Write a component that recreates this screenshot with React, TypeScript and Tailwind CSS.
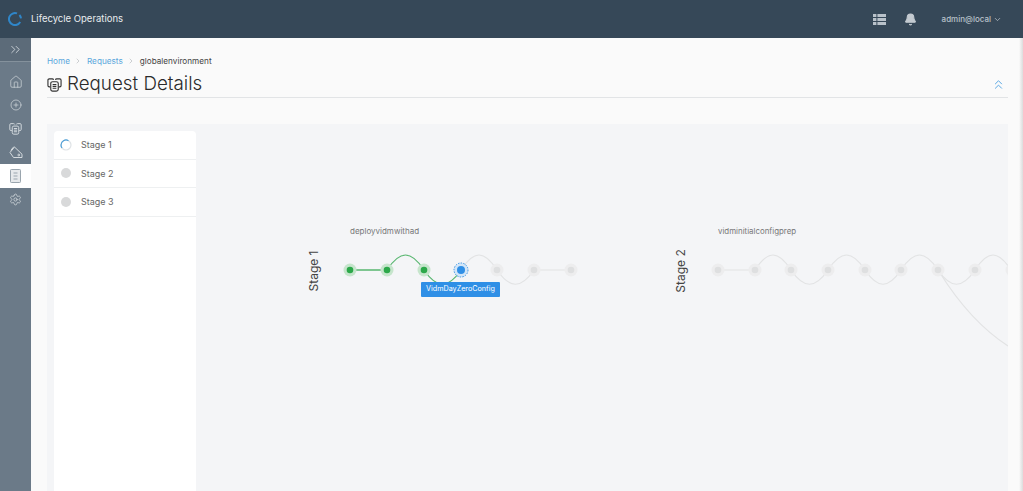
import { Bell, ChevronDown, ChevronRight, ChevronsRight, ChevronsUp, CirclePlus, House, Settings } from 'lucide-react';

const font = { fontFamily: 'Inter' };

function Logo() {
    return (
        <svg width="14" height="14" viewBox="0 0 14 14" fill="none" stroke="#2f86c9" strokeWidth="2">
            <path d="M9 1.4A6 6 0 1 0 12.2 10" />
            <path d="M11.4 3A6 6 0 0 1 13 6.4" />
        </svg>
    );
}

function ListIcon() {
    return (
        <svg width="13" height="11" viewBox="0 0 13 11" fill="#b9c2ca">
            <rect x="0" y="0" width="3.4" height="3" />
            <rect x="4.4" y="0" width="8.6" height="3" />
            <rect x="0" y="4" width="3.4" height="3" />
            <rect x="4.4" y="4" width="8.6" height="3" />
            <rect x="0" y="8" width="3.4" height="3" />
            <rect x="4.4" y="8" width="8.6" height="3" />
        </svg>
    );
}

function RequestIcon({ size, color, fill }: { size: number; color: string; fill: string }) {
    return (
        <svg width={size} height={size} viewBox="0 0 16 16" fill="none" stroke={color} strokeWidth="1.2">
            <path d="M3.5 10.5H2.4a1.4 1.4 0 0 1-1.4-1.4V3.4A1.4 1.4 0 0 1 2.4 2h3.2a1.4 1.4 0 0 1 1.4 1" />
            <path d="M9 3a1.4 1.4 0 0 1 1.4-1h3.2A1.4 1.4 0 0 1 15 3.4v5.7a1.4 1.4 0 0 1-1.4 1.4h-1.1" />
            <rect x="4" y="5" width="8" height="10" rx="2" fill={fill} />
            <path d="M6 8h4M6 10h4M6 12h4" />
        </svg>
    );
}

function TagsIcon() {
    return (
        <svg width="14" height="14" viewBox="0 0 14 14" fill="none" stroke="#d4dade" strokeWidth="1">
            <path d="M1 7.5 5.5 2l7.5 7.2V12.5H4.5Z" />
            <path d="M3 3.8 5 1.6M1.8 5.4l2-2.3" />
            <circle cx="9.8" cy="10" r="0.9" />
        </svg>
    );
}

function DocIcon() {
    return (
        <svg width="11" height="14" viewBox="0 0 11 14" fill="none" stroke="#9aa5ae" strokeWidth="1">
            <rect x="0.5" y="0.5" width="10" height="13" rx="0.8" fill="#e6e9eb" />
            <path d="M3.5 4h4M3.5 7h4M3.5 10h4" />
        </svg>
    );
}

function Spinner() {
    return (
        <svg width="12" height="12" viewBox="0 0 12 12" fill="none" strokeWidth="1.2">
            <circle cx="6" cy="6" r="5" stroke="#dfe3e6" />
            <path d="M8.5 1.7A5 5 0 0 0 1 6a5 5 0 0 0 1 3" stroke="#4d9fd8" />
        </svg>
    );
}

function SideItem({ children, active }: { children: React.ReactNode; active?: boolean }) {
    return (
        <div className={active ? 'h-[23.5px] flex items-center justify-center bg-white' : 'h-[23.5px] flex items-center justify-center'}>
            {children}
        </div>
    );
}

function Node({ x, kind }: { x: number; kind: 'done' | 'active' | 'idle' }) {
    if (kind === 'active') {
        return (
            <g>
                <circle cx={x} cy={270} r={7} fill="#d3e6f8" stroke="#3c95e4" strokeWidth="1" strokeDasharray="1.5 1.2" />
                <circle cx={x} cy={270} r={4} fill="#2f8fe6" />
            </g>
        );
    }
    const halo = kind === 'done' ? '#c6e5cc' : '#ededee';
    const dot = kind === 'done' ? '#2ca84a' : '#dedfe0';
    return (
        <g>
            <circle cx={x} cy={270} r={6.5} fill={halo} />
            <circle cx={x} cy={270} r={3.3} fill={dot} />
        </g>
    );
}

const green = '#57b66f';
const grey = '#e2e3e4';

function StageGraph() {
    // page coordinates, shifted into the canvas by the group transform
    return (
        <svg width="812" height="360" className="absolute left-0 top-0" fill="none" strokeWidth="1.2">
            <g transform="translate(-196 -131)">
                <path d="M350 270H387" stroke={green} strokeWidth="1.5" />
                <path d="M387 270C400 250 411 250 424 270" stroke={green} />
                <path d="M424 270C437 289 448 289 461 270" stroke={green} />
                <path d="M461 270C474 250 484 250 497 270" stroke={grey} />
                <path d="M497 270C510 289 521 289 534 270" stroke={grey} />
                <path d="M534 270H571" stroke={grey} />
                <Node x={350} kind="done" />
                <Node x={387} kind="done" />
                <Node x={424} kind="done" />
                <Node x={461} kind="active" />
                <Node x={497} kind="idle" />
                <Node x={534} kind="idle" />
                <Node x={571} kind="idle" />

                <path d="M718 270H755" stroke={grey} />
                <path d="M755 270C768 250 778 250 791 270" stroke={grey} />
                <path d="M791 270C804 289 815 289 828 270" stroke={grey} />
                <path d="M828 270C841 250 852 250 865 270" stroke={grey} />
                <path d="M865 270C878 289 888 289 901 270" stroke={grey} />
                <path d="M901 270C914 250 925 250 938 270" stroke={grey} />
                <path d="M938 270C951 289 962 289 975 270" stroke={grey} />
                <path d="M975 270C988 250 998 250 1011 270" stroke={grey} />
                <path d="M940 273C960 305 982 329 1008 346" stroke={grey} />
                {[718, 755, 791, 828, 865, 901, 938, 975, 1012].map((x) => (
                    <Node key={x} x={x} kind="idle" />
                ))}
            </g>
        </svg>
    );
}

export default function App() {
    return (
        <div className="h-screen flex flex-col overflow-hidden bg-[#fafafa]" style={font}>
            {/* Header */}
            <header className="h-[38px] shrink-0 flex items-center bg-[#364858] pl-[8px] pr-[21px]">
                <Logo />
                <span className="ml-[9px] text-[9.5px] text-[#e8ecef]">Lifecycle Operations</span>
                <div className="ml-auto flex items-center">
                    <ListIcon />
                    <Bell className="ml-[18px] w-[13px] h-[13px] text-[#c3cad0] fill-[#c3cad0]" />
                    <span className="ml-[25px] text-[8px] font-medium text-[#b9c2ca]">admin@local</span>
                    <ChevronDown className="ml-[2px] w-[9px] h-[9px] text-[#b9c2ca]" />
                </div>
            </header>

            <div className="flex-1 flex min-h-0">
                {/* Sidebar */}
                <aside className="w-[31px] shrink-0 bg-[#6b7a88]">
                    <div className="h-[24px] flex items-center justify-center bg-[#5c6b79] border-b border-[#84919c]">
                        <ChevronsRight className="w-[15px] h-[15px] text-[#dde2e6]" strokeWidth={1.3} />
                    </div>
                    <div className="pt-[8px]">
                        <SideItem><House className="w-[14px] h-[14px] text-[#d4dade]" strokeWidth={1.2} /></SideItem>
                        <SideItem><CirclePlus className="w-[12px] h-[12px] text-[#d4dade]" strokeWidth={1.4} /></SideItem>
                        <SideItem><RequestIcon size={13} color="#d4dade" fill="#6b7a88" /></SideItem>
                        <SideItem><TagsIcon /></SideItem>
                        <SideItem active><DocIcon /></SideItem>
                        <SideItem><Settings className="w-[13px] h-[13px] text-[#d4dade]" strokeWidth={1.4} /></SideItem>
                    </div>
                </aside>

                {/* Main */}
                <main className="flex-1 min-w-0 flex flex-col pl-[16px] pr-[11px] pt-[17px]">
                    <nav className="flex items-center h-[12px] text-[8.2px]">
                        <span className="text-[#5ba7dc]">Home</span>
                        <ChevronRight className="mx-[4.5px] w-[8px] h-[8px] text-[#b5b9bd]" />
                        <span className="text-[#5ba7dc]">Requests</span>
                        <ChevronRight className="mx-[4.5px] w-[8px] h-[8px] text-[#b5b9bd]" />
                        <span className="text-[#444]">globalenvironment</span>
                    </nav>
                    <div className="mt-[1px] h-[30px] flex items-center pt-[4px] border-b border-[#e2e4e6]">
                        <RequestIcon size={15} color="#333333" fill="#fafafa" />
                        <h1 className="ml-[5px] text-[18.8px] leading-none text-[#2b2b2b] font-light">Request Details</h1>
                        <ChevronsUp className="ml-auto mr-[2px] w-[15px] h-[15px] text-[#5aa8e4]" strokeWidth={1.6} />
                    </div>

                    <div className="mt-[26px] flex-1 min-h-0 flex bg-[#f4f5f7] pl-[7px] pt-[7px]">
                        {/* Stage list */}
                        <ul className="w-[142px] shrink-0 bg-white rounded-t-[4px] text-[9px] text-[#666]">
                            <li className="h-[28.6px] flex items-center pl-[6px] border-b border-[#eef0f1]">
                                <Spinner />
                                <span className="ml-[9px]">Stage 1</span>
                            </li>
                            <li className="h-[28.6px] flex items-center pl-[6px] border-b border-[#eef0f1]">
                                <span className="w-[12px] h-[12px] flex items-center justify-center"><span className="w-[10px] h-[10px] rounded-full bg-[#d8d9da]" /></span>
                                <span className="ml-[9px]">Stage 2</span>
                            </li>
                            <li className="h-[28.6px] flex items-center pl-[6px] border-b border-[#eef0f1]">
                                <span className="w-[12px] h-[12px] flex items-center justify-center"><span className="w-[10px] h-[10px] rounded-full bg-[#d8d9da]" /></span>
                                <span className="ml-[9px]">Stage 3</span>
                            </li>
                        </ul>

                        {/* Canvas */}
                        <div className="relative flex-1 overflow-hidden">
                            <StageGraph />
                            <span className="absolute left-[154px] top-[94px] text-[8px] leading-[12px] text-[#777]">deployvidmwithad</span>
                            <span className="absolute left-[522px] top-[94px] text-[7.9px] leading-[12px] text-[#777]">vidminitialconfigprep</span>
                            <span className="absolute left-[96px] top-[133px] w-[44px] text-center -rotate-90 text-[12px] leading-[14px] text-[#444]">Stage 1</span>
                            <span className="absolute left-[463px] top-[133px] w-[44px] text-center -rotate-90 text-[12px] leading-[14px] text-[#444]">Stage 2</span>
                            <div className="absolute left-[225px] top-[151px] w-[79px] h-[15px] flex items-center justify-center rounded-[1px] bg-[#2f8fe6] text-[7.2px] text-white">VidmDayZeroConfig</div>
                        </div>
                    </div>
                </main>

                {/* Right edge shadow */}
                <div className="w-[4px] shrink-0 bg-gradient-to-r from-[#fafafa] to-[#dcdcdc]" />
            </div>
        </div>
    );
}
